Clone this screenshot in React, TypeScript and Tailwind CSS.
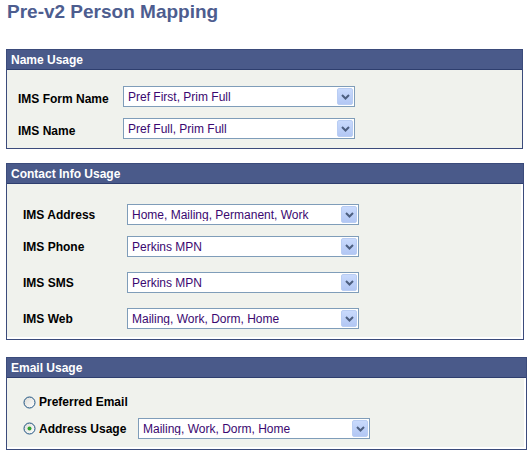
import React from 'react';

type Row = { label: string; value: string; gap: number };

const Chevron = () => (
  <svg width="9" height="6" viewBox="0 0 9 6" className="block">
    <path d="M1 1 L4.5 4.5 L8 1" fill="none" stroke="#4d5f80" strokeWidth="2" />
  </svg>
);

// combo box in the old XP style
const Combo = ({ value, width }: { value: string; width: number }) => (
  <div
    className="flex h-[21px] shrink-0 items-center border border-[#7f9db9] bg-white pl-[4px] pr-[1px]"
    style={{ width }}
  >
    <span className="flex-1 truncate text-[12px] leading-none text-[#3a0870]">{value}</span>
    <div className="flex h-[17px] w-[16px] items-center justify-center rounded-[2px] border border-[#b9cdf3] bg-gradient-to-b from-[#c9dafc] to-[#b2c7f4]">
      <Chevron />
    </div>
  </div>
);

const Radio = ({ checked }: { checked?: boolean }) => (
  <svg width="13" height="13" viewBox="0 0 13 13" className="block shrink-0">
    <defs>
      <linearGradient id={checked ? 'rg1' : 'rg2'} x1="0" y1="0" x2="1" y2="1">
        <stop offset="0" stopColor="#dcdcd6" />
        <stop offset="1" stopColor="#ffffff" />
      </linearGradient>
    </defs>
    <circle cx="6.5" cy="6.5" r="5.5" fill={`url(#${checked ? 'rg1' : 'rg2'})`} stroke="#1c5180" strokeWidth="1" />
    {checked && <circle cx="6.5" cy="6.5" r="2" fill="#2fa22f" />}
  </svg>
);

const Box = ({
  title,
  width,
  children,
  edge,
}: {
  title: string;
  width: number;
  children: React.ReactNode;
  edge?: boolean;
}) => (
  <div className="ml-[6px] border border-[#3b4b7b] bg-white" style={{ width }}>
    <div className="h-[20px] border-b border-[#2e3e6e] bg-[#4a5a8a] pl-[4px] text-[12px] font-bold leading-[20px] text-white">
      {title}
    </div>
    <div className={`bg-[#f0f2ed] ${edge ? 'mr-[2px] mb-[2px]' : ''}`}>{children}</div>
  </div>
);

const nameRows: Row[] = [
  { label: 'IMS Form Name', value: 'Pref First, Prim Full', gap: 0 },
  { label: 'IMS Name', value: 'Pref Full, Prim Full', gap: 11 },
];

const contactRows: Row[] = [
  { label: 'IMS Address', value: 'Home, Mailing, Permanent, Work', gap: 0 },
  { label: 'IMS Phone', value: 'Perkins MPN', gap: 11 },
  { label: 'IMS SMS', value: 'Perkins MPN', gap: 15 },
  { label: 'IMS Web', value: 'Mailing, Work, Dorm, Home', gap: 15 },
];

export default function App() {
  return (
    <div className="h-[455px] w-[531px] bg-white font-['Liberation_Sans',Arial,sans-serif] text-black">
      <h1 className="pl-[7px] text-[19px] font-bold leading-[24px] text-[#4d5d8f]">Pre-v2 Person Mapping</h1>

      <div className="mt-[25px]">
        <Box title="Name Usage" width={517}>
          <div className="pb-[9px] pl-[11px] pt-[16px]">
            {nameRows.map((r) => (
              <div key={r.label} className="flex h-[21px] items-center" style={{ marginTop: r.gap }}>
                <span className="w-[105px] pt-[5px] text-[12px] font-bold leading-[14px]">{r.label}</span>
                <Combo value={r.value} width={232} />
              </div>
            ))}
          </div>
        </Box>
      </div>

      <div className="mt-[14px]">
        <Box title="Contact Info Usage" width={518} edge>
          <div className="pb-[8px] pl-[16px] pt-[20px]">
            {contactRows.map((r) => (
              <div key={r.label} className="flex h-[21px] items-center" style={{ marginTop: r.gap }}>
                <span className="w-[104px] text-[12px] font-bold leading-[14px]">{r.label}</span>
                <Combo value={r.value} width={232} />
              </div>
            ))}
          </div>
        </Box>
      </div>

      <div className="mt-[17px]">
        <Box title="Email Usage" width={521} edge>
          <div className="pb-[8px] pl-[16px] pt-[17px]">
            <div className="flex h-[14px] items-center gap-[3px]">
              <Radio />
              <span className="text-[12px] font-bold leading-[14px]">Preferred Email</span>
            </div>
            <div className="mt-[9px] flex h-[21px] items-center">
              <Radio checked />
              <span className="ml-[3px] w-[99px] text-[12px] font-bold leading-[14px]">Address Usage</span>
              <Combo value="Mailing, Work, Dorm, Home" width={232} />
            </div>
          </div>
        </Box>
      </div>
    </div>
  );
}
